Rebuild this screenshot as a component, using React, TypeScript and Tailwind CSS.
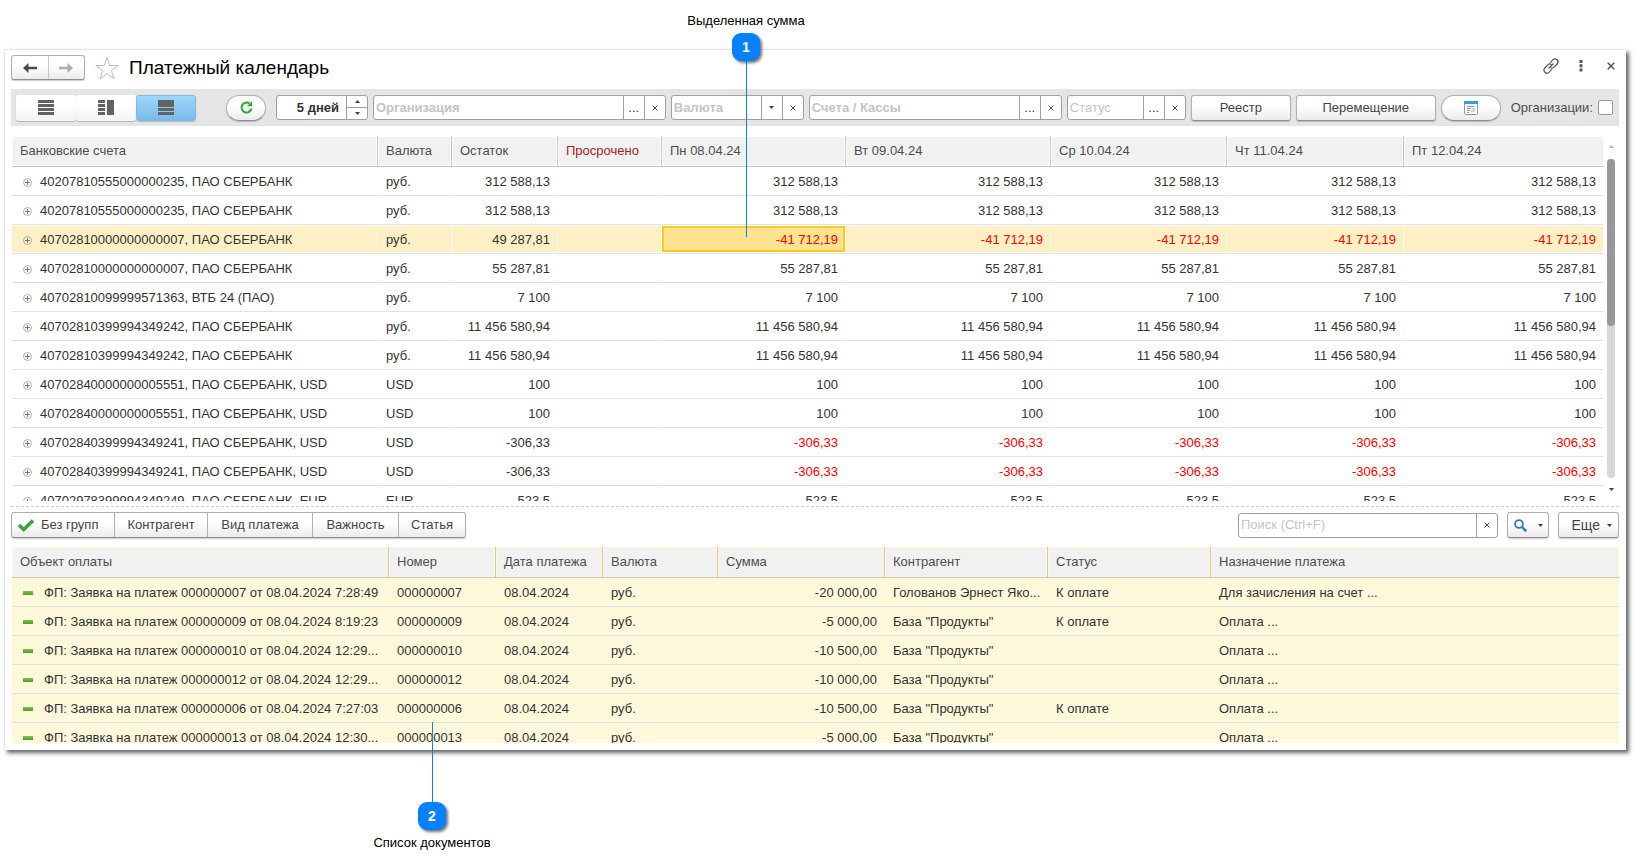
import { ReactNode, useState } from 'react';

const days = ['Пн 08.04.24', 'Вт 09.04.24', 'Ср 10.04.24', 'Чт 11.04.24', 'Пт 12.04.24'];

interface Account {
  name: string;
  currency: string;
  rest: string;
  day: string;
  selected?: boolean;
}

const accounts: Account[] = [
  { name: '40207810555000000235, ПАО СБЕРБАНК', currency: 'руб.', rest: '312 588,13', day: '312 588,13' },
  { name: '40207810555000000235, ПАО СБЕРБАНК', currency: 'руб.', rest: '312 588,13', day: '312 588,13' },
  { name: '40702810000000000007, ПАО СБЕРБАНК', currency: 'руб.', rest: '49 287,81', day: '-41 712,19', selected: true },
  { name: '40702810000000000007, ПАО СБЕРБАНК', currency: 'руб.', rest: '55 287,81', day: '55 287,81' },
  { name: '40702810099999571363, ВТБ 24 (ПАО)', currency: 'руб.', rest: '7 100', day: '7 100' },
  { name: '40702810399994349242, ПАО СБЕРБАНК', currency: 'руб.', rest: '11 456 580,94', day: '11 456 580,94' },
  { name: '40702810399994349242, ПАО СБЕРБАНК', currency: 'руб.', rest: '11 456 580,94', day: '11 456 580,94' },
  { name: '40702840000000005551, ПАО СБЕРБАНК, USD', currency: 'USD', rest: '100', day: '100' },
  { name: '40702840000000005551, ПАО СБЕРБАНК, USD', currency: 'USD', rest: '100', day: '100' },
  { name: '40702840399994349241, ПАО СБЕРБАНК, USD', currency: 'USD', rest: '-306,33', day: '-306,33' },
  { name: '40702840399994349241, ПАО СБЕРБАНК, USD', currency: 'USD', rest: '-306,33', day: '-306,33' },
  { name: '40702978399994349249, ПАО СБЕРБАНК, EUR', currency: 'EUR', rest: '523,5', day: '523,5' },
];

const documents = [
  { title: 'ФП: Заявка на платеж 000000007 от 08.04.2024 7:28:49', num: '000000007', sum: '-20 000,00', partner: 'Голованов Эрнест Яко...', status: 'К оплате', purpose: 'Для зачисления на счет ...' },
  { title: 'ФП: Заявка на платеж 000000009 от 08.04.2024 8:19:23', num: '000000009', sum: '-5 000,00', partner: 'База "Продукты"', status: 'К оплате', purpose: 'Оплата ...' },
  { title: 'ФП: Заявка на платеж 000000010 от 08.04.2024 12:29...', num: '000000010', sum: '-10 500,00', partner: 'База "Продукты"', status: '', purpose: 'Оплата ...' },
  { title: 'ФП: Заявка на платеж 000000012 от 08.04.2024 12:29...', num: '000000012', sum: '-10 000,00', partner: 'База "Продукты"', status: '', purpose: 'Оплата ...' },
  { title: 'ФП: Заявка на платеж 000000006 от 08.04.2024 7:27:03', num: '000000006', sum: '-10 500,00', partner: 'База "Продукты"', status: 'К оплате', purpose: 'Оплата ...' },
  { title: 'ФП: Заявка на платеж 000000013 от 08.04.2024 12:30...', num: '000000013', sum: '-5 000,00', partner: 'База "Продукты"', status: '', purpose: 'Оплата ...' },
];

const raised = 'border border-[#b0b0b0] border-b-[#8f8f8f] bg-linear-to-b from-white from-40% to-[#ebebeb] text-[#444] shadow-[0_1px_1px_rgba(0,0,0,0.2)]';

function Caret({ up = false, className = 'fill-[#404040]' }: { up?: boolean; className?: string }) {
  return (
    <svg width="5" height="3" viewBox="0 0 5 3" className={className}>
      <path d={up ? 'M0 3h5L2.5 0z' : 'M0 0h5L2.5 3z'} />
    </svg>
  );
}

function Cross({ size = 6 }: { size?: number }) {
  return (
    <svg width={size} height={size} viewBox="0 0 8 8" fill="none" stroke="#484848" strokeWidth="1.3">
      <path d="M.7.7l6.6 6.6M7.3.7L.7 7.3" />
    </svg>
  );
}

interface FieldProps {
  label: string;
  className: string;
  bold?: boolean;
  picker?: 'dots' | 'list';
}

function Field({ label, className, bold, picker }: FieldProps) {
  return (
    <div className={`flex h-[25px] overflow-hidden rounded-[3px] border border-[#a0a0a0] bg-white ${className}`}>
      <input
        type="text"
        aria-label={label}
        placeholder={label}
        className={`min-w-0 flex-1 px-0.5 outline-none placeholder:text-[#c4c4c4] ${bold ? 'font-bold' : ''}`}
      />
      {picker && (
        <button aria-label={`${label}: выбрать`} className="flex w-[21px] items-center justify-center border-l border-[#a0a0a0]">
          {picker === 'dots' ? '...' : <Caret />}
        </button>
      )}
      <button aria-label={`${label}: очистить`} className="flex w-[21px] items-center justify-center border-l border-[#a0a0a0]">
        <Cross />
      </button>
    </div>
  );
}

function HeadCell({ children, yellow, red }: { children: ReactNode; yellow?: boolean; red?: boolean }) {
  const edge = yellow
    ? 'border-r-[#cfcab0] shadow-[inset_0_0_0_1px_#fdf6d8]'
    : 'border-r-[#c6c6c6] shadow-[inset_0_0_0_1px_#fff]';
  return (
    <th className={`h-[31px] border-r border-b border-b-[#c6c6c6] bg-[#f1f1f1] px-2 text-left font-normal last:border-r-0 ${edge} ${red ? 'text-[#a81c28]' : 'text-[#4d4d4d]'}`}>
      {children}
    </th>
  );
}

function AccountRow({ row }: { row: Account }) {
  const negative = row.day.startsWith('-');
  const cell = row.selected
    ? 'border-r border-b border-r-white border-b-[#e2e2e2] bg-[#fdf0c5] shadow-[inset_0_1px_#fff,inset_0_-1px_#fff]'
    : 'border-r border-b border-r-white border-b-[#e2e2e2]';
  return (
    <tr className="h-[29px]">
      <td className={`pt-0.5 pl-[11px] ${cell}`}>
        <div className="flex items-center gap-2">
          <svg width="9" height="9" viewBox="0 0 9 9" fill="none" className="shrink-0">
            <circle cx="4.500" cy="4.500" r="4" stroke="#a8a8a8" strokeWidth=".9" />
            <path d="M2 4.500h5M4.500 2v5" stroke="#777" />
          </svg>
          <span className="truncate">{row.name}</span>
        </div>
      </td>
      <td className={`px-2 pt-0.5 ${cell}`}>{row.currency}</td>
      <td className={`pt-0.5 pr-[7px] text-right ${cell}`}>{row.rest}</td>
      <td className={cell} />
      {days.map((day, i) =>
        row.selected && i === 0 ? (
          <td key={day} className={`${cell} p-0`}>
            <div className="my-px flex h-[26px] items-center justify-end border-2 border-[#fac922] bg-[#fee490] pt-0.5 pr-[5px] text-[#f00]">
              {row.day}
            </div>
          </td>
        ) : (
          <td key={day} className={`pt-0.5 pr-[7px] text-right ${cell} ${negative ? 'text-[#f00]' : ''}`}>{row.day}</td>
        )
      )}
    </tr>
  );
}

function Badge({ children }: { children: ReactNode }) {
  return (
    <span className="flex size-7 items-center justify-center rounded-[9px] bg-[#0580ff] text-sm font-bold text-white shadow-[2px_2px_3px_rgba(0,0,0,0.55)]">
      {children}
    </span>
  );
}

export default function App() {
  const [view, setView] = useState(2);
  const [byOrg, setByOrg] = useState(false);

  const views = [
    { label: 'Список', d: 'M0 0h16v3H0zM0 4h16v3H0zM0 8h16v3H0zM0 12h16v3H0z' },
    { label: 'Колонки', d: 'M0 0h7v3H0zM0 4h7v3H0zM0 8h7v3H0zM0 12h7v3H0zM9 0h7v15H9z' },
    { label: 'Панели', d: 'M0 0h16v7H0zM0 8h16v3H0zM0 12h16v3H0z' },
  ];

  return (
    <div className="relative min-h-screen overflow-hidden bg-white pt-[49px] pb-[116px] font-['Liberation_Sans',Arial,sans-serif] text-[13px] leading-4 text-[#333]">
      <main className="mr-[9px] ml-1 border-t border-l border-[#e6e6e6] bg-white pt-[5px] pr-[7px] pb-[7px] pl-[6px] shadow-[3px_3px_4px_rgba(0,0,0,0.6)]">
        <header className="flex h-[25px] items-center">
          <div className={`flex h-[25px] w-[74px] rounded-[3px] ${raised}`}>
            <button aria-label="Назад" className="flex flex-1 items-center justify-center border-r border-[#c8c8c8]">
              <svg width="14" height="10" viewBox="0 0 14 10" fill="#4a4a4a">
                <path d="M0 5l5.5-5v3.7H14v2.6H5.5V10z" />
              </svg>
            </button>
            <button aria-label="Вперед" className="flex flex-1 items-center justify-center">
              <svg width="14" height="10" viewBox="0 0 14 10" fill="#adadad">
                <path d="M14 5L8.5 0v3.7H0v2.6h8.5V10z" />
              </svg>
            </button>
          </div>
          <button aria-label="В избранное" className="ml-[10px]">
            <svg width="24" height="24" viewBox="0 0 24 24" fill="none" stroke="#b6bbc2" strokeWidth="1">
              <path d="M12 1.5l2.7 8h8.5l-6.9 5 2.6 8.1L12 17.7l-6.9 4.9 2.6-8.1-6.9-5h8.5z" />
            </svg>
          </button>
          <h1 className="ml-[10px] text-[19px] leading-6 text-black">Платежный календарь</h1>
          <div className="ml-auto flex items-center pr-1 pb-[3px]">
            <button aria-label="Ссылка">
              <svg width="16" height="16" viewBox="0 0 16 16" fill="none" stroke="#555" strokeWidth="1.200" strokeLinecap="round">
                <path d="M7.500 4.300l2.300-2.500a3 3 0 0 1 4.300 4.200l-3 3.200a2.900 2.900 0 0 1-3.300.600" />
                <path d="M8.500 11.700l-2.300 2.500A3 3 0 0 1 1.900 10l3-3.200a2.900 2.900 0 0 1 3.300-.600M6 10l4-4" />
              </svg>
            </button>
            <button aria-label="Меню" className="ml-5">
              <svg width="4" height="12" viewBox="0 0 4 12" fill="#555">
                <path d="M.5 0h3v3h-3zM.5 4.300h3v3h-3zM.5 8.600h3v3h-3z" />
              </svg>
            </button>
            <button aria-label="Закрыть" className="ml-6">
              <Cross size={8} />
            </button>
          </div>
        </header>

        <div className="mt-[9px] flex h-[37px] items-center gap-[5px] bg-[#e5e5e5] pr-[6px] pl-[5px]">
          <div className="mr-[25px] flex">
            {views.map((v, i) => (
              <button
                key={v.label}
                aria-label={v.label}
                onClick={() => setView(i)}
                className={`flex h-[26px] w-[60px] items-center justify-center rounded-[3px] shadow-[0_1px_1px_rgba(0,0,0,0.2)] ${
                  view === i
                    ? 'border border-[#7bbbe8] bg-linear-to-b from-[#9ed8fc] to-[#78bbe8]'
                    : 'bg-linear-to-b from-white from-40% to-[#f2f2f2]'
                }`}
              >
                <svg width="16" height="15" viewBox="0 0 16 15" fill="#636363">
                  <path d={v.d} />
                </svg>
              </button>
            ))}
          </div>
          <button aria-label="Обновить" className={`mr-[5px] flex h-[26px] w-10 items-center justify-center rounded-full ${raised}`}>
            <svg width="13" height="13" viewBox="0 0 13 13" fill="none" stroke="#2fa82f" strokeWidth="2">
              <path d="M11.500 7.500A5 5 0 1 1 9.500 2.500" />
              <path d="M12 .3v5H7z" fill="#2fa82f" stroke="none" />
            </svg>
          </button>
          <div className="flex h-[25px] w-[92px] overflow-hidden rounded-[3px] border border-[#a0a0a0] bg-white">
            <input type="text" aria-label="Период" defaultValue="5 дней" className="min-w-0 flex-1 pr-[7px] text-right font-bold outline-none" />
            <div className="flex w-[21px] flex-col border-l border-[#a0a0a0]">
              <button aria-label="Больше" className="flex flex-1 items-center justify-center border-b border-[#a0a0a0]">
                <Caret up />
              </button>
              <button aria-label="Меньше" className="flex flex-1 items-center justify-center">
                <Caret />
              </button>
            </div>
          </div>
          <Field label="Организация" className="min-w-[120px] flex-1" bold picker="dots" />
          <Field label="Валюта" className="w-[133px]" bold picker="list" />
          <Field label="Счета / Кассы" className="w-[253px]" bold picker="dots" />
          <Field label="Статус" className="w-[119px]" picker="dots" />
          <button className={`h-[26px] w-[100px] rounded-[3px] ${raised}`}>Реестр</button>
          <button className={`h-[26px] w-[140px] rounded-[3px] ${raised}`}>Перемещение</button>
          <button aria-label="Календарь" className={`flex h-[26px] w-[60px] items-center justify-center rounded-full ${raised}`}>
            <svg width="14" height="14" viewBox="0 0 14 14">
              <rect x=".5" y=".5" width="13" height="13" rx="1" fill="#fff" stroke="#7d9db5" />
              <path d="M0 0h14v3H0z" fill="#3d9ae0" />
              <path d="M3 5.500h7M3 7.500h4M3 9.500h3M3 11.500h2" stroke="#9a9a9a" />
              <path d="M8 7h3v4H7V9h1z" fill="#d4d4d4" />
            </svg>
          </button>
          <label htmlFor="orgs" className="ml-[5px] whitespace-nowrap text-[#4d4d4d]">Организации:</label>
          <input
            id="orgs"
            type="checkbox"
            checked={byOrg}
            onChange={(e) => setByOrg(e.target.checked)}
            className="size-[15px] appearance-none rounded-[2px] border border-[#9a9a9a] bg-white checked:bg-[#78bbe8]"
          />
        </div>

        <section className="mt-[10px] flex h-[365px] gap-[3px] overflow-hidden pl-px">
          <table className="min-w-0 flex-1 table-fixed border-separate border-spacing-0 self-start">
            <colgroup>
              <col className="w-[366px]" />
              <col className="w-[74px]" />
              <col className="w-[106px]" />
              <col className="w-[104px]" />
              <col className="w-[184px]" />
              <col className="w-[205px]" />
              <col className="w-[176px]" />
              <col className="w-[177px]" />
              <col />
            </colgroup>
            <thead>
              <tr>
                <HeadCell>Банковские счета</HeadCell>
                <HeadCell>Валюта</HeadCell>
                <HeadCell>Остаток</HeadCell>
                <HeadCell red>Просрочено</HeadCell>
                {days.map((day) => (
                  <HeadCell key={day}>{day}</HeadCell>
                ))}
              </tr>
            </thead>
            <tbody>
              {accounts.map((row, i) => (
                <AccountRow key={i} row={row} />
              ))}
            </tbody>
          </table>
          <div className="mr-1 flex w-2 shrink-0 flex-col items-center pt-[9px] pb-[10px]">
            <Caret up className="shrink-0 fill-[#b5b5b5]" />
            <div className="mt-[11px] w-2 flex-1 rounded-full bg-[#d6d6d6]">
              <div className="h-[167px] rounded-full bg-[#989898]" />
            </div>
            <Caret className="mt-[10px] shrink-0 fill-[#404040]" />
          </div>
        </section>

        <div className="mt-[5px] border-t border-dashed border-[#cfcfcf]" />

        <div className="mt-[5px] flex items-center">
          <div className={`flex h-[26px] rounded-[3px] ${raised}`}>
            <button className="flex w-[103px] items-center gap-[7px] border-r border-[#b0b0b0] pl-[6px]">
              <svg width="16" height="13" viewBox="0 0 16 13" fill="none" stroke="#35a83c" strokeWidth="3.500">
                <path d="M1 6l4.800 4.500L15 1.500" />
              </svg>
              Без групп
            </button>
            <button className="w-[93px] border-r border-[#b0b0b0]">Контрагент</button>
            <button className="w-[105px] border-r border-[#b0b0b0]">Вид платежа</button>
            <button className="w-[86px] border-r border-[#b0b0b0]">Важность</button>
            <button className="w-[66px]">Статья</button>
          </div>
          <Field label="Поиск (Ctrl+F)" className="ml-auto w-[260px]" />
          <button aria-label="Найти" className={`ml-[9px] flex h-[26px] w-[42px] items-center justify-center gap-[11px] rounded-[3px] ${raised}`}>
            <svg width="13" height="13" viewBox="0 0 13 13" fill="none" stroke="#3379ad">
              <circle cx="5" cy="5" r="3.900" strokeWidth="1.800" />
              <path d="M8 8l4.200 4.200" strokeWidth="2.400" />
            </svg>
            <Caret />
          </button>
          <button className={`ml-[9px] flex h-[26px] w-[61px] items-center justify-end gap-[7px] rounded-[3px] pr-[6px] text-sm ${raised}`}>
            Еще
            <Caret />
          </button>
        </div>

        <section className="mt-[9px] h-[196px] overflow-hidden pl-px">
          <table className="w-full table-fixed border-separate border-spacing-0">
            <colgroup>
              <col className="w-[377px]" />
              <col className="w-[107px]" />
              <col className="w-[107px]" />
              <col className="w-[115px]" />
              <col className="w-[167px]" />
              <col className="w-[163px]" />
              <col className="w-[163px]" />
              <col />
            </colgroup>
            <thead>
              <tr>
                {['Объект оплаты', 'Номер', 'Дата платежа', 'Валюта', 'Сумма', 'Контрагент', 'Статус', 'Назначение платежа'].map((title) => (
                  <HeadCell key={title} yellow>{title}</HeadCell>
                ))}
              </tr>
            </thead>
            <tbody>
              {documents.map((doc) => (
                <tr key={doc.num} className="h-[29px] bg-[#fff9dc] *:border-b *:border-[#e2e2e2] *:px-2 *:pt-0.5 *:whitespace-nowrap">
                  <td>
                    <div className="flex items-center gap-[11px] pl-[3px]">
                      <span className="h-1 w-[10px] shrink-0 bg-linear-to-b from-[#7cc748] to-[#4f9c22]" />
                      <span>{doc.title}</span>
                    </div>
                  </td>
                  <td>{doc.num}</td>
                  <td>08.04.2024</td>
                  <td>руб.</td>
                  <td className="text-right">{doc.sum}</td>
                  <td>{doc.partner}</td>
                  <td>{doc.status}</td>
                  <td>{doc.purpose}</td>
                </tr>
              ))}
            </tbody>
          </table>
        </section>
      </main>

      {/* callouts over the window */}
      <div className="absolute top-[13px] left-[686px] flex w-[120px] flex-col items-center text-black">
        <span className="mb-1 whitespace-nowrap">Выделенная сумма</span>
        <Badge>1</Badge>
        <span className="h-[176px] w-px bg-[#0580ff]" />
      </div>
      <div className="absolute top-[722px] left-[372px] flex w-[120px] flex-col items-center text-black">
        <span className="h-20 w-px bg-[#0580ff]" />
        <Badge>2</Badge>
        <span className="mt-[5px] whitespace-nowrap">Список документов</span>
      </div>
    </div>
  );
}
